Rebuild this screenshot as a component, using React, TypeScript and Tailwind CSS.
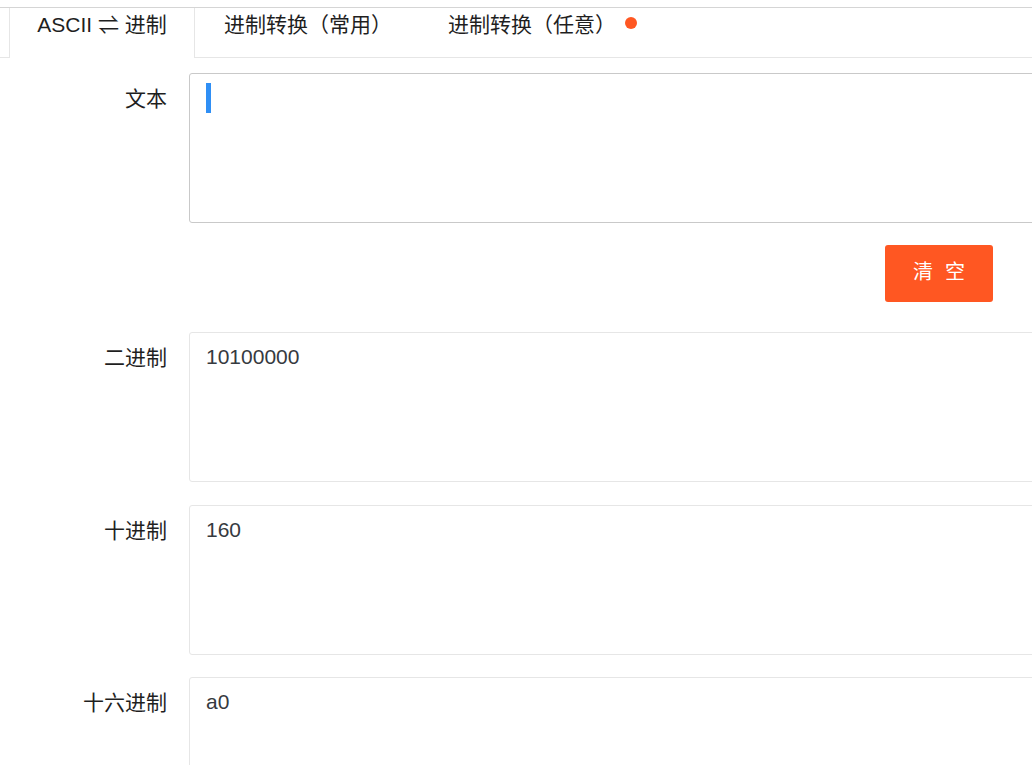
import React from "react";

interface FieldRowProps {
  label: string;
  value?: string;
  focused?: boolean;
  className?: string;
}

const rows = [
  { label: "二进制", value: "10100000", className: "mb-[23px]" },
  { label: "十进制", value: "160", className: "mb-[22px]" },
  { label: "十六进制", value: "a0", className: "" },
];

function FieldRow({ label, value, focused, className }: FieldRowProps) {
  return (
    <div className={`flex ${className ?? ""}`}>
      <div className="w-[167px] flex-none pt-[11px] text-right leading-[30px] text-[#1f1f1f]">
        {label}
      </div>
      <div
        className={`ml-[22px] h-[150px] w-[900px] flex-none rounded-[3px] border bg-white py-[9px] pl-[16px] pr-[15px] leading-[30px] text-[#363a40] ${
          focused ? "border-[#c9c9c9]" : "border-[#e6e6e6]"
        }`}
      >
        {focused ? (
          <span className="inline-block h-[30px] w-[5px] bg-[#2f8ff5] align-top" />
        ) : (
          value
        )}
      </div>
    </div>
  );
}

const App: React.FC = () => {
  return (
    <div className="min-h-screen w-full overflow-hidden bg-white pt-[7px] font-['Liberation_Sans','Noto_Sans_CJK_SC',sans-serif] text-[21px]">
      {/* tabs */}
      <div className="flex h-[51px] border-y border-t-[#d5d5d5] border-b-[#e6e6e6] pl-[9px]">
        <div className="-mb-px h-[50px] w-[186px] flex-none border-x border-[#e6e6e6] bg-white pt-[2px] text-center leading-[30px] text-[#1f1f1f]">
          ASCII ⇌ 进制
        </div>
        <div className="flex-none pl-[29px] pr-[28px] pt-[2px] leading-[30px] text-[#1f1f1f]">
          进制转换（常用）
        </div>
        <div className="flex flex-none items-start px-[28px] pt-[2px] leading-[30px] text-[#1f1f1f]">
          进制转换（任意）
          <span className="ml-[9px] mt-[7px] h-[12px] w-[12px] rounded-full bg-[#ff5722]" />
        </div>
      </div>

      {/* form */}
      <div className="pt-[15px]">
        <FieldRow label="文本" focused />
        <div className="flex w-[993px] justify-end pb-[30px] pt-[22px]">
          <button className="flex h-[57px] w-[108px] items-center justify-center gap-[12px] rounded-[3px] bg-[#ff5722] pb-[3px] text-[20px] text-white">
            <span>清</span>
            <span>空</span>
          </button>
        </div>
        {rows.map((r) => (
          <FieldRow key={r.label} label={r.label} value={r.value} className={r.className} />
        ))}
      </div>
    </div>
  );
};

export default App;
